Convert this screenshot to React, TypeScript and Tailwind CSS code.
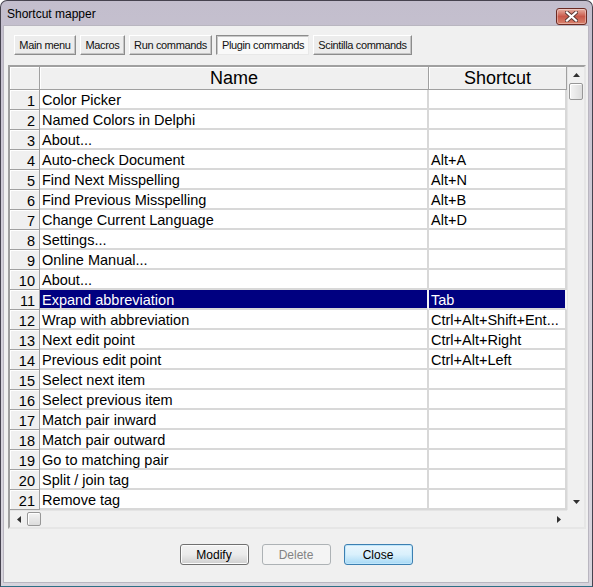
import React from "react";

const rows: [string, string][] = [
  ["Color Picker", ""],
  ["Named Colors in Delphi", ""],
  ["About...", ""],
  ["Auto-check Document", "Alt+A"],
  ["Find Next Misspelling", "Alt+N"],
  ["Find Previous Misspelling", "Alt+B"],
  ["Change Current Language", "Alt+D"],
  ["Settings...", ""],
  ["Online Manual...", ""],
  ["About...", ""],
  ["Expand abbreviation", "Tab"],
  ["Wrap with abbreviation", "Ctrl+Alt+Shift+Ent..."],
  ["Next edit point", "Ctrl+Alt+Right"],
  ["Previous edit point", "Ctrl+Alt+Left"],
  ["Select next item", ""],
  ["Select previous item", ""],
  ["Match pair inward", ""],
  ["Match pair outward", ""],
  ["Go to matching pair", ""],
  ["Split / join tag", ""],
  ["Remove tag", ""],
];

const tabs = [
  { label: "Main menu", w: "w-[62px]" },
  { label: "Macros", w: "w-[45px]" },
  { label: "Run commands", w: "w-[83px]" },
  { label: "Plugin commands", w: "w-[93px]", active: true },
  { label: "Scintilla commands", w: "w-[99px]" },
];

const SELECTED = 10;

const App = () => {
  return (
    <div className="w-[593px] h-[587px] flex flex-col bg-gradient-to-b from-[#c3becd] via-[#d3d0da] to-[#d7d4dd] border border-[#46434f] border-b-[#2f6f86] rounded-t-[7px] overflow-hidden font-['Liberation_Sans',Arial,sans-serif] select-none">
      {/* Title bar */}
      <div className="h-[24px] flex items-center justify-between pl-[6px] pr-[5px] shrink-0">
        <span className="text-[12px] text-black leading-none mt-[1px]">Shortcut mapper</span>
        <div className="w-[31px] h-[17px] mt-[6px] rounded-[3px] border border-[#6c2a22] bg-gradient-to-b from-[#e6b0a4] via-[#c8584a] to-[#d8826c] flex items-center justify-center shadow-[inset_0_0_0_1px_rgba(255,255,255,0.35)]">
          <svg width="13" height="11" viewBox="0 0 13 11">
            <path d="M2 1.5 L11 9.5 M11 1.5 L2 9.5" stroke="#5a3a36" strokeWidth="4" strokeLinecap="square" />
            <path d="M2 1.5 L11 9.5 M11 1.5 L2 9.5" stroke="#ffffff" strokeWidth="2.2" strokeLinecap="square" />
          </svg>
        </div>
      </div>

      {/* Body */}
      <div className="flex-1 ml-[2px] mr-[3px] mb-[3px] bg-[#f0f0f0] border border-[#b9b6c0] flex flex-col">
        {/* Tabs */}
        <div className="flex gap-[4px] pl-[10px] pt-[9px]">
          {tabs.map((t) => (
            <div
              key={t.label}
              className={`${t.w} h-[20px] flex items-center justify-center text-[11px] tracking-[-0.35px] text-[#111] border ${
                t.active
                  ? "bg-[#f9f9f9] border-[#8c8c8c] border-r-[#e8e8e8] border-b-[#e8e8e8] shadow-[inset_1px_1px_0_#c8c8c8] pt-[1px] pl-[1px]"
                  : "bg-[#ececec] border-[#ffffff] border-r-[#8c8c8c] border-b-[#8c8c8c] shadow-[inset_-1px_-1px_0_#c4c4c4]"
              }`}
            >
              {t.label}
            </div>
          ))}
        </div>

        {/* Grid */}
        <div className="mt-[10px] ml-[4px] w-[578px] border-2 border-[#a0a0a0] border-r-[#e6e6e6] border-b-[#e6e6e6] shadow-[inset_1px_1px_0_#696969] flex flex-col bg-white">
          <div className="flex">
            <div className="w-[557px] h-[443px] overflow-hidden flex flex-col">
              {/* Header */}
              <div className="flex h-[23px] shrink-0">
                <div className="w-[30px] bg-[#f0f0f0] border-r border-b border-[#a0a0a0] shadow-[inset_1px_1px_0_#ffffff]" />
                <div className="w-[389px] bg-[#f0f0f0] border-r border-b border-[#a0a0a0] shadow-[inset_1px_1px_0_#ffffff] flex items-center justify-center text-[18px] text-black leading-none">
                  Name
                </div>
                <div className="w-[138px] bg-[#f0f0f0] border-r border-b border-[#a0a0a0] shadow-[inset_1px_1px_0_#ffffff] flex items-center justify-center text-[18px] text-black leading-none">
                  Shortcut
                </div>
              </div>
              {/* Rows */}
              {rows.map(([name, key], i) => {
                const sel = i === SELECTED;
                return (
                  <div key={i} className="flex h-[20px] shrink-0 text-[14.5px] leading-none">
                    <div className="w-[30px] bg-[#f0f0f0] border-r border-b border-[#a0a0a0] shadow-[inset_1px_1px_0_#ffffff] flex items-center justify-end pr-[4px] pt-[3px] text-black">
                      {i + 1}
                    </div>
                    <div
                      className={`w-[389px] border-r-2 border-b-2 border-[#d8d8d8] flex items-center pl-[2px] pt-[2px] whitespace-nowrap overflow-hidden ${
                        sel ? "bg-[#000080] text-white border-r-[#f4f4f4]" : "bg-white text-black"
                      }`}
                    >
                      {name}
                    </div>
                    <div
                      className={`w-[138px] border-r-2 border-b-2 border-[#d8d8d8] flex items-center pl-[2px] pt-[2px] whitespace-nowrap overflow-hidden ${
                        sel ? "bg-[#000080] text-white border-r-[#f4f4f4]" : "bg-white text-black"
                      }`}
                    >
                      {key}
                    </div>
                  </div>
                );
              })}
            </div>

            {/* Vertical scrollbar */}
            <div className="w-[17px] h-[443px] bg-[#f0f0f0] border-l border-[#e4e4e4] flex flex-col items-center">
              <div className="h-[16px] w-full flex items-center justify-center">
                <svg width="7" height="4" viewBox="0 0 7 4">
                  <path d="M0 4 L3.5 0 L7 4 Z" fill="#303030" />
                </svg>
              </div>
              <div className="w-[14px] h-[17px] rounded-[2px] border border-[#979797] bg-gradient-to-r from-[#f4f4f4] to-[#dcdcdc] shadow-[inset_1px_1px_0_#ffffff]" />
              <div className="flex-1" />
              <div className="h-[17px] w-full flex items-center justify-center">
                <svg width="7" height="4" viewBox="0 0 7 4">
                  <path d="M0 0 L7 0 L3.5 4 Z" fill="#303030" />
                </svg>
              </div>
            </div>
          </div>

          {/* Horizontal scrollbar */}
          <div className="flex h-[17px]">
            <div className="w-[557px] bg-[#f0f0f0] border-t border-[#e4e4e4] flex items-center">
              <div className="w-[17px] h-full flex items-center justify-center">
                <svg width="4" height="7" viewBox="0 0 4 7">
                  <path d="M4 0 L4 7 L0 3.5 Z" fill="#303030" />
                </svg>
              </div>
              <div className="w-[14px] h-[14px] rounded-[2px] border border-[#979797] bg-gradient-to-b from-[#f4f4f4] to-[#dcdcdc] shadow-[inset_1px_1px_0_#ffffff]" />
              <div className="flex-1" />
              <div className="w-[17px] h-full flex items-center justify-center">
                <svg width="4" height="7" viewBox="0 0 4 7">
                  <path d="M0 0 L4 3.5 L0 7 Z" fill="#303030" />
                </svg>
              </div>
            </div>
            <div className="w-[17px] bg-[#f0f0f0]" />
          </div>
        </div>

        {/* Buttons */}
        <div className="flex justify-center gap-[13px] mt-[15px]">
          <div className="w-[69px] h-[21px] rounded-[3px] border border-[#707070] bg-gradient-to-b from-[#f2f2f2] via-[#ebebeb] to-[#cfcfcf] shadow-[inset_0_0_0_1px_#fcfcfc] flex items-center justify-center text-[12px] text-black">
            Modify
          </div>
          <div className="w-[69px] h-[21px] rounded-[3px] border border-[#adb2b5] bg-[#f4f4f4] flex items-center justify-center text-[12px] text-[#838383]">
            Delete
          </div>
          <div className="w-[69px] h-[21px] rounded-[3px] border border-[#3c7fb1] bg-gradient-to-b from-[#eaf6fd] via-[#d9f0fc] to-[#a7d9f5] shadow-[inset_0_0_0_1px_#bfe6fb] flex items-center justify-center text-[12px] text-black">
            Close
          </div>
        </div>
      </div>
    </div>
  );
};

export default App;
